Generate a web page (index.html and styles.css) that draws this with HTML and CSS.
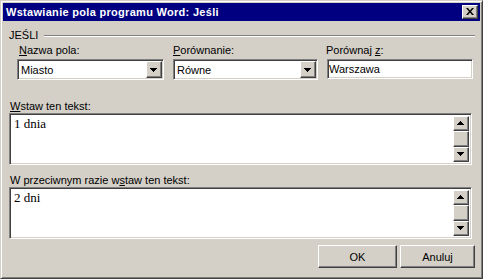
FILE: index.html
```html
<!DOCTYPE html>
<html lang="pl">
<head>
    <meta charset="UTF-8">
    <title>Wstawianie pola programu Word: Jeśli</title>
    <link rel="stylesheet" href="styles.css">
</head>
<body>
    <div class="window">
        <div class="titlebar">
            <span class="title">Wstawianie pola programu Word: Jeśli</span>
            <button class="close-btn">
                <svg width="8" height="7" viewBox="0 0 8 7"><path d="M0 0h2l2 2.5 2-2.5h2l-3 3.5 3 3.5h-2l-2-2.5-2 2.5h-2l3-3.5z" fill="#000"/></svg>
            </button>
        </div>

        <div class="group-head">
            <span>JEŚLI</span>
            <div class="etched"></div>
        </div>

        <div class="fields">
            <div class="field field-name">
                <label><u>N</u>azwa pola:</label>
                <div class="combo">
                    <span class="value">Miasto</span>
                    <span class="drop-btn"><svg width="7" height="4" viewBox="0 0 7 4" shape-rendering="crispEdges"><path d="M0 0h7v1h-1v1h-1v1h-1v1h-1v-1h-1v-1h-1v-1h-1z" fill="#000"/></svg></span>
                </div>
            </div>
            <div class="field field-compare">
                <label><u>P</u>orównanie:</label>
                <div class="combo">
                    <span class="value">Równe</span>
                    <span class="drop-btn"><svg width="7" height="4" viewBox="0 0 7 4" shape-rendering="crispEdges"><path d="M0 0h7v1h-1v1h-1v1h-1v1h-1v-1h-1v-1h-1v-1h-1z" fill="#000"/></svg></span>
                </div>
            </div>
            <div class="field field-with">
                <label class="label-with">Porównaj <u>z</u>:</label>
                <div class="textbox">Warszawa</div>
            </div>
        </div>

        <label class="area-label first"><u>W</u>staw ten tekst:</label>
        <div class="textarea">
            <div class="text">1 dnia</div>
            <div class="scrollbar">
                <span class="sb-btn"><svg width="7" height="4" viewBox="0 0 7 4" shape-rendering="crispEdges"><path d="M3 0h1v1h1v1h1v1h1v1h-7v-1h1v-1h1v-1h1z" fill="#000"/></svg></span>
                <span class="sb-btn"></span>
                <span class="sb-btn"><svg width="7" height="4" viewBox="0 0 7 4" shape-rendering="crispEdges"><path d="M0 0h7v1h-1v1h-1v1h-1v1h-1v-1h-1v-1h-1v-1h-1z" fill="#000"/></svg></span>
            </div>
        </div>

        <label class="area-label second">W przeciwnym razie w<u>s</u>taw ten tekst:</label>
        <div class="textarea">
            <div class="text">2 dni</div>
            <div class="scrollbar">
                <span class="sb-btn"><svg width="7" height="4" viewBox="0 0 7 4" shape-rendering="crispEdges"><path d="M3 0h1v1h1v1h1v1h1v1h-7v-1h1v-1h1v-1h1z" fill="#000"/></svg></span>
                <span class="sb-btn"></span>
                <span class="sb-btn"><svg width="7" height="4" viewBox="0 0 7 4" shape-rendering="crispEdges"><path d="M0 0h7v1h-1v1h-1v1h-1v1h-1v-1h-1v-1h-1v-1h-1z" fill="#000"/></svg></span>
            </div>
        </div>

        <div class="actions">
            <button class="btn ok">OK</button>
            <button class="btn cancel">Anuluj</button>
        </div>
    </div>
</body>
</html>
```

FILE: styles.css
```css
body {
    margin: 0;
    font-family: "Liberation Sans", Arial, sans-serif;
    font-size: 11px;
    color: #000;
}

.window {
    width: 483px;
    height: 279px;
    box-sizing: border-box;
    background-color: #d4d0c8;
    border: 1px solid;
    border-color: #d4d0c8 #404040 #404040 #d4d0c8;
    box-shadow: inset 1px 1px #fff, inset -1px -1px #808080;
    padding: 2px;
}

.titlebar {
    height: 18px;
    background-color: #000080;
    color: #fff;
    display: flex;
    align-items: center;
    justify-content: space-between;
    padding: 0 2px 0 3px;
}

.title {
    font-weight: bold;
    font-size: 11px;
    letter-spacing: 0.3px;
}

.close-btn,
.drop-btn,
.sb-btn,
.btn {
    box-sizing: border-box;
    background-color: #d4d0c8;
    border: 1px solid;
    border-color: #fff #404040 #404040 #fff;
    box-shadow: inset -1px -1px #808080;
}

.close-btn {
    width: 16px;
    height: 14px;
    padding: 0 1px 1px 0;
    display: flex;
    align-items: center;
    justify-content: center;
}

.group-head {
    display: flex;
    align-items: center;
    margin-top: 8px;
    padding-left: 6px;
    line-height: 13px;
}

.etched {
    flex: 1;
    height: 0;
    border-top: 1px solid #808080;
    border-bottom: 1px solid #fff;
    margin: 0 5px 0 6px;
}

.fields {
    display: flex;
    gap: 9px;
    margin-top: 2px;
    padding-left: 14px;
}

.field label {
    display: block;
    line-height: 13px;
    margin-bottom: 2px;
    padding-left: 2px;
}

.field .label-with {
    padding-left: 0;
    margin-left: -1px;
}

.field-name {
    width: 147px;
}

.field-compare {
    width: 145px;
}

.field-compare label {
    padding-left: 0;
}

.field-with {
    width: 146px;
}

.combo,
.textbox,
.textarea {
    box-sizing: border-box;
    background-color: #fff;
    border: 1px solid;
    border-color: #808080 #fff #fff #808080;
    box-shadow: inset 1px 1px #404040, inset -1px -1px #d4d0c8;
}

.combo {
    height: 21px;
    display: flex;
    align-items: center;
    padding: 1px;
}

.combo .value {
    flex: 1;
    padding-left: 2px;
}

.drop-btn {
    width: 16px;
    height: 17px;
    display: flex;
    align-items: center;
    justify-content: center;
    padding: 1px 1px 0 0;
}

.textbox {
    height: 20px;
    line-height: 16px;
    padding: 1px 1px;
}

.area-label {
    display: block;
    line-height: 13px;
    margin-left: 7px;
}

.area-label.first {
    margin-top: 20px;
}

.area-label.second {
    margin-top: 9px;
}

.textarea {
    height: 52px;
    margin: 0 8px 0 6px;
    display: flex;
    padding: 2px;
}

.textarea .text {
    flex: 1;
    font-family: "Liberation Serif", "Times New Roman", serif;
    font-size: 13px;
    line-height: 14px;
    padding: 1px 0 0 2px;
}

.scrollbar {
    width: 16px;
    display: flex;
    flex-direction: column;
}

.sb-btn {
    height: 16px;
    display: flex;
    align-items: center;
    justify-content: center;
    padding: 0 1px 1px 0;
}

.actions {
    display: flex;
    justify-content: flex-end;
    gap: 3px;
    margin: 6px 5px 0 0;
}

.btn {
    height: 23px;
    padding: 0;
    font-family: "Liberation Sans", Arial, sans-serif;
    font-size: 11px;
    color: #000;
}

.btn.ok {
    width: 79px;
}

.btn.cancel {
    width: 75px;
}
```
